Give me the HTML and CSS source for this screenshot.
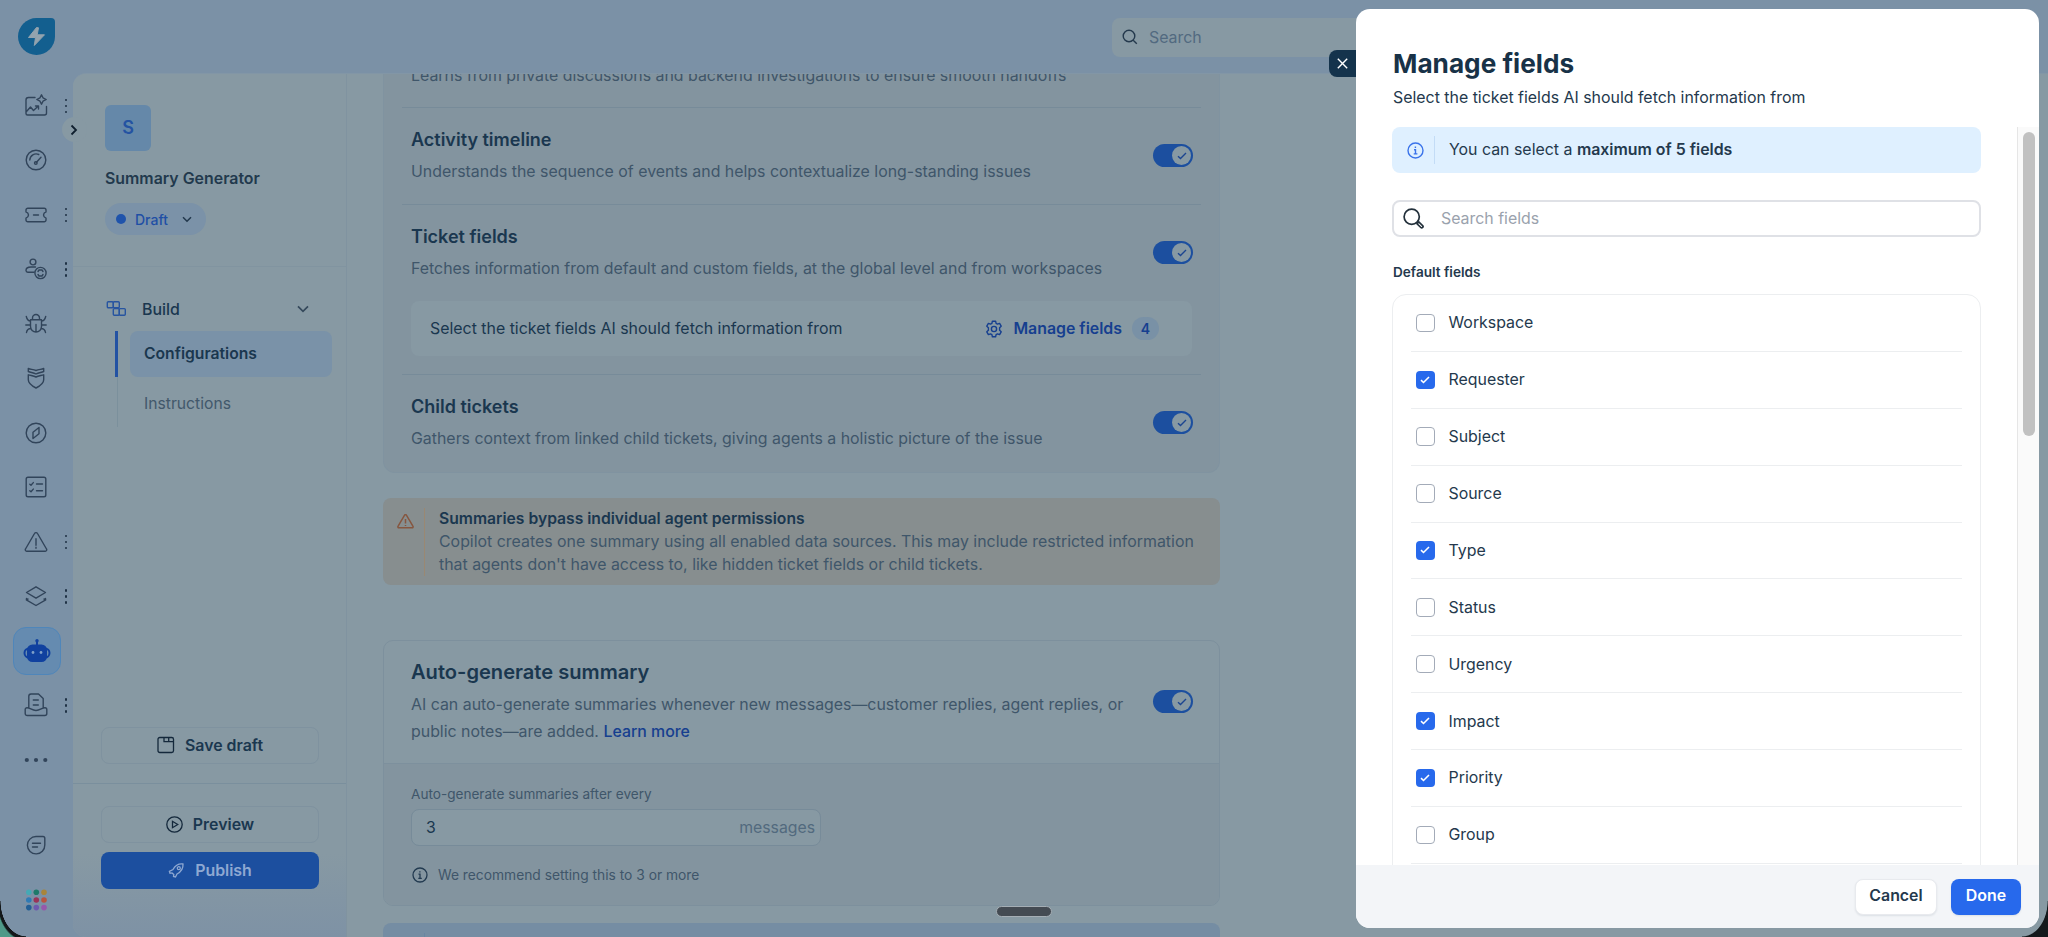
FILE: index.html
```html
<!DOCTYPE html>
<html lang="en">

<head>
  <meta charset="utf-8">
  <title>Summary Generator</title>
  <link rel="stylesheet" href="styles.css">
</head>

<body>
  <div class="app">
    <nav class="rail">
      <div class="logo">
        <svg width="37" height="37" viewBox="0 0 37 37"><path d="M18.5 0H33a4 4 0 0 1 4 4v14.500a18.500 18.500 0 1 1-18.500-18.500z" fill="#135f8f"/><path d="M18.500 9.500 10.500 19.500h7l-1.200 8L26.500 16.800h-7.300l1.300-7z" fill="#93a3ae" stroke="#93a3ae" stroke-linejoin="round"/></svg>
      </div>
      <div class="rail-item">
        <svg class="icon" width="24" height="24" viewBox="0 0 24 24"><path d="M11 3.500H4.500a2.500 2.500 0 0 0-2.500 2.500v13.500A1.500 1.500 0 0 0 3.500 21h17a2 2 0 0 0 2-2v-6.500M2.500 17.500l4-4.500 3 3.500 4.500-4.200M11.500 12h3v3M17.500.8l1.500 3 3.200 1.700-3.200 1.700-1.500 3-1.500-3-3.200-1.700L16 3.800z"/></svg>
        <span class="kebab"></span>
      </div>
      <div class="rail-item">
        <svg class="icon" width="24" height="24" viewBox="0 0 24 24"><circle cx="12" cy="12" r="9.800"/><path d="M5.800 12a6.300 6.300 0 0 1 9-5.500M12.500 14.300l4.500-5"/><circle cx="11.800" cy="15" r="1.300"/></svg>
      </div>
      <div class="rail-item">
        <svg class="icon" width="24" height="24" viewBox="0 0 24 24"><path d="M3.800 5.300h16.400a1.800 1.800 0 0 1 1.800 1.800v1.800c-3.300 1.400-3.300 4.800 0 6.200v1.800a1.800 1.800 0 0 1-1.800 1.800H3.800A1.800 1.800 0 0 1 2 16.900v-1.800c3.300-1.400 3.300-4.800 0-6.200V7.100a1.800 1.800 0 0 1 1.800-1.800zM9.500 12h5"/></svg>
        <span class="kebab"></span>
      </div>
      <div class="rail-item">
        <svg class="icon" width="24" height="24" viewBox="0 0 24 24"><circle cx="9" cy="5" r="2.900"/><path d="M10 15.200H3.800A1.800 1.800 0 0 1 2 13.500c0-2.300 2.500-3.500 5-3.500h4.500"/><circle cx="16.500" cy="16" r="5.600"/><path d="M14 14.500l1-1.500h3l1 1.500M14 17.500l1 1.500h3l1-1.500"/></svg>
        <span class="kebab"></span>
      </div>
      <div class="rail-item">
        <svg class="icon" width="24" height="24" viewBox="0 0 24 24"><path d="M8.500 7.500V6a3.500 3.500 0 0 1 7 0v1.500M6.500 7.800h11v6.700a5.500 5.500 0 0 1-11 0zM12 12.500v7.500M6.500 9C4.500 9 3 7.500 2.300 4.500M17.500 9c2 0 3.500-1.500 4.200-4.500M6.500 13H1.800M17.500 13h4.700M7 16.500c-2 0-4 1-4.500 4M17 16.500c2 0 4 1 4.500 4"/></svg>
      </div>
      <div class="rail-item">
        <svg class="icon" width="24" height="24" viewBox="0 0 24 24"><path d="M4.300 2.500c2.500.8 5 1 7.700 2 2.700-1 5.200-1.200 7.700-2v3c-2.500 1-5.200 1.200-7.700 2.500-2.500-1.300-5.200-1.500-7.700-2.500zM4.300 8.800c2.500.8 5.200 1 7.700 2.200 2.500-1.200 5.200-1.400 7.700-2.200v5c0 3.700-3.700 6.200-7.700 8.200-4-2-7.700-4.500-7.700-8.200z"/></svg>
      </div>
      <div class="rail-item">
        <svg class="icon" width="24" height="24" viewBox="0 0 24 24"><circle cx="12" cy="12" r="9.800"/><path d="M15 6.500v6.300l-6 4.700v-6.300zM9 11.200l2-1.400M15 12.800l-2 1.400"/></svg>
      </div>
      <div class="rail-item">
        <svg class="icon" width="24" height="24" viewBox="0 0 24 24"><rect x="2.200" y="2.200" width="19.600" height="19.600" rx="1.800"/><path d="M5.800 9.200l1.200 1 2.300-2.600M5.800 15.700l1.200 1 2.300-2.600M12.500 9H18.500M12.500 15.700H18.500"/></svg>
      </div>
      <div class="rail-item">
        <svg class="icon" width="24" height="24" viewBox="0 0 24 24"><path d="M10.500 3.500a1.700 1.700 0 0 1 3 0l9 15.500a1.400 1.400 0 0 1-1.200 2.200H2.700A1.400 1.400 0 0 1 1.500 19zM12 8.800v6.500M12 17.300v1"/></svg>
        <span class="kebab"></span>
      </div>
      <div class="rail-item">
        <svg class="icon" width="24" height="24" viewBox="0 0 24 24"><path d="M12 2.800l9.500 5.700-9.500 5.700-9.500-5.700zM4 15l-1.700.8L12 21.500l9.700-5.700L20 15M2.500 14.500v1M21.500 14.500v1"/></svg>
        <span class="kebab"></span>
      </div>
      <div class="rail-item">
        <div class="rail-active">
          <svg width="28" height="26" viewBox="0 0 28 26"><path d="M14 2.500V8" stroke="#10419f" stroke-width="2"/><circle cx="14" cy="2.800" r="1.700" fill="#10419f"/><rect x="1.500" y="10.500" width="25" height="9" rx="4.500" fill="none" stroke="#10419f" stroke-width="2"/><rect x="4" y="6.500" width="20" height="17.500" rx="5.500" fill="#10419f"/><circle cx="10" cy="14.500" r="1.400" fill="#7fa0c8"/><circle cx="18" cy="14.500" r="1.400" fill="#7fa0c8"/></svg>
        </div>
      </div>
      <div class="rail-item">
        <svg class="icon" width="24" height="24" viewBox="0 0 24 24"><path d="M4.800 15V3.300A2.300 2.300 0 0 1 7 1h7.500l4.700 4.500V15M9.300 7h5M9.300 12h5M1.200 16.500a1.800 1.800 0 0 1 1.800-1.800c3 0 5 2.800 9 2.800s6-2.800 9-2.800a1.800 1.800 0 0 1 1.800 1.800v4a2 2 0 0 1-2 2H3.200a2 2 0 0 1-2-2z"/></svg>
        <span class="kebab"></span>
      </div>
      <div class="rail-item">
        <svg width="24" height="24" viewBox="0 0 24 24" fill="#31445a"><circle cx="2.800" cy="12" r="2.100"/><circle cx="12" cy="12" r="2.100"/><circle cx="21.300" cy="12" r="2.100"/></svg>
      </div>
      <div class="rail-item rail-chat">
        <svg class="icon" width="24" height="24" viewBox="0 0 24 24"><path d="M12 3.500h7a1.800 1.800 0 0 1 1.800 1.800V12A8.700 8.700 0 1 1 12 3.500zM8.500 10.200h8M8.500 14h5"/></svg>
      </div>
      <div class="rail-item">
        <svg width="24" height="24" viewBox="0 0 24 24"><circle cx="4.800" cy="4.300" r="2.800" fill="#45a9b5"/><circle cx="12.300" cy="4.300" r="2.800" fill="#1d7a6a"/><circle cx="20" cy="4.300" r="2.800" fill="#a8853a"/><circle cx="4.800" cy="12" r="2.800" fill="#2f7bb5"/><circle cx="12.300" cy="12" r="2.800" fill="#9a3459"/><circle cx="20" cy="12" r="2.800" fill="#b8553f"/><circle cx="4.800" cy="19.600" r="2.800" fill="#235f95"/><circle cx="12.300" cy="19.600" r="2.800" fill="#6e5ab0"/><circle cx="20" cy="19.600" r="2.800" fill="#9757ab"/></svg>
      </div>
    </nav>

    <div class="main">
      <header class="topbar">
        <div class="top-search">
          <svg width="16" height="16" viewBox="0 0 16 16" fill="none" stroke="#24394d" stroke-width="1.400"><circle cx="7" cy="7" r="5.800"/><path d="M11.200 11.200l3.600 3.600"/></svg>
          <span>Search</span>
        </div>
      </header>

      <div class="workspace">
        <span class="expand"><svg width="8" height="12" viewBox="0 0 8 12" fill="none" stroke="#0f1f2e" stroke-width="1.800"><path d="M1.500 1.500L6 6l-4.500 4.500"/></svg></span>
        <aside class="side">
          <div class="side-head">
            <div class="avatar">S</div>
            <div class="agent-name">Summary Generator</div>
            <div class="status"><i></i>Draft<svg width="10" height="7" viewBox="0 0 10 7" fill="none" stroke="#22384d" stroke-width="1.500"><path d="M1 1.200l4 4 4-4"/></svg></div>
          </div>
          <div class="side-nav">
            <div class="group">
              <svg width="21" height="16" viewBox="0 0 20 16" fill="none" stroke="#2754a0" stroke-width="1.400"><rect x=".8" y=".8" width="6" height="6" rx="1"/><rect x="6.800" y=".8" width="6" height="6" rx="1"/><rect x="6.800" y="7.600" width="6" height="6.600" rx="1"/><rect x="12.800" y="7.600" width="6" height="6.600" rx="1"/></svg>
              <span>Build</span>
              <svg class="chev" width="12" height="8" viewBox="0 0 12 8" fill="none" stroke="#35495c" stroke-width="1.700"><path d="M1 1.300l5 5 5-5"/></svg>
            </div>
            <div class="nav-row active"><span>Configurations</span></div>
            <div class="nav-row"><span>Instructions</span></div>
          </div>
          <div class="save-box">
            <button class="btn ghost"><svg width="18" height="18" viewBox="0 0 18 18" fill="none" stroke="#14283b" stroke-width="1.300"><rect x="1" y="1.500" width="15.500" height="15" rx="1.800"/><path d="M7 1.500v4.200h9.500M11.700 1.500v4.200"/></svg><span>Save draft</span></button>
          </div>
          <div class="publish-box">
            <button class="btn ghost"><svg width="17" height="17" viewBox="0 0 17 17" fill="none" stroke="#14283b" stroke-width="1.300"><circle cx="8.500" cy="8.500" r="7.700"/><path d="M6.500 5.300v6.400l5.200-3.200z"/></svg><span>Preview</span></button>
            <button class="btn solid"><svg width="17" height="17" viewBox="0 0 17 17" fill="none" stroke="#8fa9d2" stroke-width="1.300"><path d="M5 7.500C7.500 3 10.500 1.500 15 2c.3 4-1.500 7.500-6 10l-1.500 3-2-.5.300-2-1.800-1.600-2 .4-.6-2z"/><circle cx="10.800" cy="6.200" r="1.500"/></svg><span>Publish</span></button>
          </div>
        </aside>

        <main class="content">
          <section class="card sources">
            <div class="row first">
              <p class="desc">Learns from private discussions and backend investigations to ensure smooth handoffs</p>
            </div>
            <div class="row">
              <h3>Activity timeline</h3>
              <p class="desc">Understands the sequence of events and helps contextualize long-standing issues</p>
              <span class="toggle"><i><svg width="10" height="8" viewBox="0 0 10 8"><path d="M1 4.200l2.500 2.300L9 1"/></svg></i></span>
            </div>
            <div class="row tickets">
              <h3>Ticket fields</h3>
              <p class="desc">Fetches information from default and custom fields, at the global level and from workspaces</p>
              <span class="toggle"><i><svg width="10" height="8" viewBox="0 0 10 8"><path d="M1 4.200l2.500 2.300L9 1"/></svg></i></span>
              <div class="manage">
                <span>Select the ticket fields AI should fetch information from</span>
                <a class="manage-link"><svg width="18" height="18" viewBox="0 0 18 18" fill="none" stroke="#163f8f" stroke-width="1.400" stroke-linejoin="round"><path d="M7.400 1.200h3.200l.5 2.100 1.400.8 2.100-.7 1.600 2.800-1.600 1.500v2.600l1.600 1.500-1.600 2.800-2.100-.7-1.400.8-.5 2.100H7.400l-.5-2.100-1.400-.8-2.100.7-1.600-2.800 1.600-1.500V7.700L1.800 6.200l1.600-2.800 2.100.7 1.400-.8z"/><circle cx="9" cy="9" r="2.600"/></svg><b>Manage fields</b></a>
                <span class="count">4</span>
              </div>
            </div>
            <div class="row last">
              <h3>Child tickets</h3>
              <p class="desc">Gathers context from linked child tickets, giving agents a holistic picture of the issue</p>
              <span class="toggle"><i><svg width="10" height="8" viewBox="0 0 10 8"><path d="M1 4.200l2.500 2.300L9 1"/></svg></i></span>
            </div>
          </section>

          <section class="warning">
            <svg width="17" height="15" viewBox="0 0 17 15" fill="none" stroke="#86563f" stroke-width="1.500" stroke-linejoin="round"><path d="M7.600 1.200a1 1 0 0 1 1.800 0l6.500 11a1 1 0 0 1-.9 1.600H2a1 1 0 0 1-.9-1.600zM8.500 5v4.500M8.500 11v1"/></svg>
            <div class="warning-text">
              <b>Summaries bypass individual agent permissions</b>
              <p>Copilot creates one summary using all enabled data sources. This may include restricted information<br>that agents don't have access to, like hidden ticket fields or child tickets.</p>
            </div>
          </section>

          <section class="card auto">
            <div class="auto-head">
              <h2>Auto-generate summary</h2>
              <p class="desc">AI can auto-generate summaries whenever new messages—customer replies, agent replies, or<br>public notes—are added. <a>Learn more</a></p>
              <span class="toggle"><i><svg width="10" height="8" viewBox="0 0 10 8"><path d="M1 4.200l2.500 2.300L9 1"/></svg></i></span>
            </div>
            <div class="auto-body">
              <label>Auto-generate summaries after every</label>
              <div class="number"><span>3</span><em>messages</em></div>
              <div class="hint"><svg width="16" height="16" viewBox="0 0 16 16" fill="none" stroke="#223a50" stroke-width="1.300"><circle cx="8" cy="8" r="7"/><path d="M6.500 7.200H8v4M6.300 11.300h3.500M7.900 4.200v1.300"/></svg><span>We recommend setting this to 3 or more</span></div>
            </div>
          </section>

          <section class="next"><div class="next-line"></div></section>
        </main>
      </div>
    </div>
  </div>

  <span class="drag-handle"></span>
  <span class="corner left"></span>
  <span class="corner right"></span>

  <div class="drawer">
    <button class="close"><svg width="11" height="11" viewBox="0 0 11 11" stroke="#fff" stroke-width="1.400"><path d="M.8.8l9.400 9.400M10.200.8L.8 10.200"/></svg></button>
    <div class="drawer-head">
      <h1>Manage fields</h1>
      <p>Select the ticket fields AI should fetch information from</p>
    </div>
    <div class="drawer-body">
      <div class="drawer-scroll">
        <div class="info">
          <svg width="17" height="17" viewBox="0 0 17 17" fill="none" stroke="#3a73ea" stroke-width="1.400"><circle cx="8.500" cy="8.500" r="7.500"/><path d="M7 7.700h1.500v4.100M6.700 11.900h3.700M8.400 4.600v1.400"/></svg>
          <span class="info-text">You can select a <b>maximum of 5 fields</b></span>
        </div>
        <div class="search">
          <svg width="21" height="21" viewBox="0 0 21 21" fill="none" stroke="#23303b" stroke-width="1.700"><circle cx="8.700" cy="8.700" r="7.600"/><path d="M14 15.800l1.800-1.800 3.800 3.600a1.300 1.300 0 0 1-1.800 1.900z"/></svg>
          <span>Search fields</span>
        </div>
        <h4>Default fields</h4>
        <div class="fields" id="fields"></div>
      </div>
      <div class="scrollbar"><i></i></div>
    </div>
    <div class="drawer-foot">
      <button class="foot-btn">Cancel</button>
      <button class="foot-btn primary">Done</button>
    </div>
  </div>

  <script src="script.js"></script>
</body>

</html>
```

FILE: script.js
```js
var fields = [
  ["Workspace", false],
  ["Requester", true],
  ["Subject", false],
  ["Source", false],
  ["Type", true],
  ["Status", false],
  ["Urgency", false],
  ["Impact", true],
  ["Priority", true],
  ["Group", false]
];

var html = "";
fields.forEach(function (f) {
  html += '<div class="field"><span class="box' + (f[1] ? ' checked' : '') + '">';
  if (f[1]) {
    html += '<svg width="10" height="8" viewBox="0 0 10 8"><path d="M1 4.200l2.500 2.300L9 1"/></svg>';
  }
  html += '</span><span>' + f[0] + '</span></div>';
});
document.getElementById("fields").innerHTML = html;
```

FILE: styles.css
```css
* {
  box-sizing: border-box;
}

body {
  margin: 0;
  height: 937px;
  overflow: hidden;
  position: relative;
  font-family: "Inter", sans-serif;
  font-size: 15.9px;
  color: #1a374f;
  background: #7b91a6;
}

h1, h2, h3, h4, p {
  margin: 0;
}

button {
  font-family: inherit;
}

.app {
  display: flex;
  height: 937px;
}

/* left icon rail */
.rail {
  width: 73px;
  flex: none;
  display: flex;
  flex-direction: column;
}

.logo {
  height: 78.5px;
  flex: none;
  padding: 18px 0 0 18px;
}

.logo svg {
  display: block;
}

.rail-item {
  height: 54.5px;
  flex: none;
  display: flex;
  align-items: center;
  padding-left: 24px;
  position: relative;
}

.icon {
  fill: none;
  stroke: #31445a;
  stroke-width: 1.4;
  stroke-linecap: round;
  stroke-linejoin: round;
}

.kebab {
  position: absolute;
  left: 64.5px;
  top: 20px;
  width: 2.5px;
  height: 2.5px;
  border-radius: 50%;
  background: #1f3245;
  box-shadow: 0 6px #1f3245, 0 12px #1f3245;
}

.rail-active {
  width: 48px;
  height: 48px;
  margin-left: -11px;
  border: 1px solid #4f86ba;
  border-radius: 13px;
  background: #658bb0;
  display: flex;
  align-items: center;
  justify-content: center;
}

.rail-chat {
  margin-top: 31px;
}

/* header */
.main {
  flex: 1;
  display: flex;
  flex-direction: column;
}

.topbar {
  height: 73px;
  flex: none;
  padding: 18px 0 0 1039px;
}

.top-search {
  width: 420px;
  height: 39px;
  padding: 0 0 1px 10px;
  border-radius: 8px;
  background: #8799a3;
  display: flex;
  align-items: center;
  gap: 11px;
  color: #526a80;
}

.workspace {
  flex: 1;
  min-height: 0;
  display: flex;
  position: relative;
  background: #8799a3;
  border-top: 1px solid #8296a6;
  border-radius: 13px 0 0 13px;
}

.expand {
  position: absolute;
  left: -11px;
  top: 43px;
  width: 25px;
  height: 25px;
  padding-right: 2px;
  border-radius: 50%;
  background: #8799a3;
  display: flex;
  align-items: center;
  justify-content: center;
}

/* agent side panel */
.side {
  width: 274px;
  flex: none;
  display: flex;
  flex-direction: column;
  border-right: 1px solid #8093a0;
  border-radius: 13px 0 0 13px;
  background: linear-gradient(#8799a3 0, #8799a3 780px, #7e92a5 100%);
}

.side-head {
  height: 193px;
  padding: 31px 0 0 32px;
  border-bottom: 1px solid #8194a0;
}

.avatar {
  width: 46px;
  height: 46px;
  border-radius: 6px;
  background: #6588a9;
  color: #2453a2;
  font-size: 18px;
  font-weight: 600;
  line-height: 46px;
  text-align: center;
}

.agent-name {
  margin-top: 16px;
  line-height: 24px;
  font-weight: 600;
  color: #22394d;
}

.status {
  width: 101px;
  height: 32px;
  margin-top: 12px;
  padding-left: 11px;
  border-radius: 16px;
  background: #7b92a8;
  color: #1f4fa5;
  font-size: 14px;
  font-weight: 500;
  display: flex;
  align-items: center;
}

.status i {
  width: 10px;
  height: 10px;
  margin-right: 9px;
  border-radius: 50%;
  background: #1f53ab;
}

.status svg {
  margin-left: 14px;
}

.side-nav {
  flex: 1;
  padding-top: 28px;
}

.group {
  height: 28px;
  margin-bottom: 8px;
  padding: 0 37px 0 33px;
  display: flex;
  align-items: center;
  font-weight: 500;
}

.group span {
  margin-left: 15px;
}

.group .chev {
  margin-left: auto;
}

.nav-row {
  height: 50px;
  margin-left: 44px;
  padding: 4px 14px 0 12px;
  border-left: 1px solid #7b909c;
  color: #42586b;
  font-size: 15.700px;
}

.nav-row span {
  display: block;
  height: 46px;
  line-height: 46px;
  padding-left: 14px;
  border-radius: 8px;
}

.nav-row.active {
  height: 46px;
  margin-left: 42px;
  padding-top: 0;
  border-left: 3px solid #2352a3;
  color: #1a374f;
  font-weight: 600;
}

.nav-row.active span {
  background: #7a92a8;
}

.save-box {
  padding: 0 27px 19px 28px;
  border-bottom: 1px solid #7a8f9d;
}

.publish-box {
  height: 153px;
  padding: 22px 27px 0 28px;
  display: flex;
  flex-direction: column;
  gap: 9px;
}

.btn {
  width: 100%;
  height: 37px;
  padding: 0 6px 1px;
  border: 1px solid #7f929f;
  border-radius: 8px;
  background: #8799a3;
  color: #1a374f;
  font-size: 15.900px;
  font-weight: 600;
  display: flex;
  align-items: center;
  justify-content: center;
  gap: 10px;
}

.btn.solid {
  border: 0;
  background: #1c4f9f;
  color: #8fa9d2;
}

/* content column */
.content {
  flex: 1;
  overflow: hidden;
  padding-left: 36px;
}

.card, .warning, .next {
  width: 837px;
}

.sources {
  padding: 0 18px;
  background: #83949f;
  border: 1px solid #8093a0;
  border-top: 0;
  border-radius: 0 0 12px 12px;
}

.row {
  position: relative;
  height: 97px;
  padding: 19px 9px 0;
  border-bottom: 1px solid #778b99;
}

.row.first {
  height: 34px;
  padding-top: 0;
  display: flex;
}

.row.first .desc {
  margin-top: -11px;
}

.row.tickets {
  height: 170px;
}

.row.last {
  border: 0;
}

.desc {
  line-height: 26px;
  color: #3f566a;
}

h3 {
  margin-bottom: 6px;
  font-size: 18px;
  line-height: 26px;
  font-weight: 600;
}

.toggle {
  position: absolute;
  right: 8px;
  top: 36px;
  width: 40px;
  height: 23px;
  border-radius: 12px;
  background: #1c4f9f;
}

.toggle i {
  position: absolute;
  right: 2px;
  top: 2px;
  width: 19px;
  height: 19px;
  border-radius: 50%;
  background: #8799a3;
  display: flex;
  align-items: center;
  justify-content: center;
}

.toggle path {
  fill: none;
  stroke: #1c4590;
  stroke-width: 1.4;
}

.manage {
  height: 55px;
  margin-top: 19px;
  padding: 0 33px 0 19px;
  border-radius: 8px;
  background: #8799a3;
  display: flex;
  align-items: center;
}

.manage-link {
  margin-left: auto;
  display: flex;
  align-items: center;
  gap: 10px;
  color: #163f8f;
}

.manage b, .info b, .warning b {
  font-weight: 600;
}

.count {
  width: 27px;
  height: 23px;
  margin-left: 10px;
  border-radius: 12px;
  background: #7991a6;
  color: #163f8f;
  font-size: 14px;
  font-weight: 600;
  line-height: 23px;
  text-align: center;
}

.warning {
  height: 87px;
  margin-top: 25px;
  padding: 10px 15px;
  border-radius: 8px;
  background: #878e8f;
  display: flex;
}

.warning svg {
  margin: 6px 10px 0 -1px;
}

.warning-text {
  height: 68px;
  padding-left: 14px;
  border-left: 1px solid #9a8872;
  line-height: 22.8px;
}

.warning b {
  display: block;
  font-size: 15.7px;
}

.warning-text p {
  color: #3f566a;
}

.auto {
  height: 266px;
  margin-top: 55px;
  border: 1px solid #7d909d;
  border-radius: 10px;
  overflow: hidden;
}

.auto-head {
  position: relative;
  height: 123px;
  padding: 17px 27px;
  border-bottom: 1px solid #7d909d;
}

.auto-head .desc {
  margin-top: 5px;
  line-height: 27px;
}

.auto-head a {
  color: #163f8f;
  font-weight: 500;
}

.auto-head .toggle {
  right: 26px;
  top: 49px;
}

h2 {
  font-size: 20.1px;
  line-height: 28px;
  font-weight: 600;
}

.auto-body {
  height: 143px;
  padding: 20px 27px;
  background: #83949f;
  font-size: 13.8px;
  color: #3f566a;
}

.auto-body label {
  display: block;
  font-size: 13.6px;
  line-height: 20px;
}

.number {
  width: 410px;
  height: 37px;
  margin-top: 5px;
  padding: 0 5px 0 14px;
  border: 1px solid #778b99;
  border-radius: 8px;
  background: #8799a3;
  display: flex;
  align-items: center;
  justify-content: space-between;
  font-size: 15.8px;
  color: #1a374f;
}

.number em {
  font-style: normal;
  color: #526a7e;
}

.hint {
  display: flex;
  align-items: center;
  gap: 10px;
  margin-top: 19px;
  padding-left: 1px;
  line-height: 20px;
}

.next {
  height: 80px;
  margin-top: 17px;
  padding: 10px 0 0 41px;
  border-radius: 8px;
  background: #758da3;
}

.next-line {
  height: 60px;
  border-left: 1px solid #6a86a2;
}

.drag-handle {
  position: absolute;
  left: 996px;
  top: 906px;
  width: 56px;
  height: 11px;
  border: 1px solid #a5aeb5;
  border-radius: 6px;
  background: #444b53;
}

/* rounded window corners */
.corner {
  position: absolute;
  bottom: 0;
  width: 26px;
  height: 36px;
}

.corner.left {
  left: 0;
  background: radial-gradient(ellipse 26px 36px at 100% 0, transparent 97%, #14181a 99%, #14181a 107%, #4f9a88 112%);
}

.corner.right {
  right: 0;
  background: radial-gradient(ellipse 26px 36px at 0 0, transparent 97%, #14191c 100%);
}

/* drawer */
.drawer {
  position: absolute;
  left: 1356px;
  top: 9px;
  width: 683px;
  height: 919px;
  border-radius: 14px;
  background: #fff;
  display: flex;
  flex-direction: column;
  color: #24394d;
}

.close {
  position: absolute;
  left: -27px;
  top: 41px;
  width: 27px;
  height: 27px;
  padding: 0;
  border: 0;
  border-radius: 8px 0 0 8px;
  background: #14334c;
  display: flex;
  align-items: center;
  justify-content: center;
}

.drawer-head {
  height: 118px;
  flex: none;
  padding: 37px 0 0 37px;
}

h1 {
  font-size: 26.2px;
  line-height: 36px;
  font-weight: 700;
  color: #183247;
}

.drawer-head p {
  margin-top: 4px;
  line-height: 24px;
}

.drawer-body {
  flex: 1;
  min-height: 0;
  display: flex;
}

.drawer-scroll {
  flex: 1;
  overflow: hidden;
  padding: 0 36px;
}

.info {
  height: 46px;
  padding: 9px 15px;
  border-radius: 8px;
  background: #dff0ff;
  display: flex;
  align-items: center;
}

.info svg {
  margin-right: 10px;
}

.info-text {
  height: 28px;
  padding-left: 14px;
  border-left: 1px solid #c3dcf6;
  line-height: 28px;
}

.search {
  height: 37px;
  margin-top: 27px;
  padding: 0 0 1px 9px;
  border: 2px solid #dfe1e6;
  border-radius: 8px;
  display: flex;
  align-items: center;
  gap: 17px;
  color: #9aa2ad;
}

h4 {
  margin: 25px 0 11px 1px;
  font-size: 13.6px;
  line-height: 21px;
  font-weight: 600;
}

.fields {
  border: 1px solid #eceef0;
  border-radius: 14px;
  padding: 0 18px 30px;
}

.field {
  height: 56.88px;
  padding-left: 5px;
  border-bottom: 1px solid #eceef0;
  display: flex;
  align-items: center;
  gap: 14px;
}

.box {
  width: 18.5px;
  height: 18.5px;
  border: 1px solid #a3abb8;
  border-radius: 4px;
  display: flex;
  align-items: center;
  justify-content: center;
}

.box.checked {
  border: 0;
  background: #2769ec;
}

.box path {
  fill: none;
  stroke: #fff;
  stroke-width: 1.6;
}

.scrollbar {
  width: 22px;
  border-left: 1px solid #e6e6e6;
  background: #fafafa;
}

.scrollbar i {
  display: block;
  width: 11.5px;
  height: 304px;
  margin: 4.5px 0 0 5px;
  border-radius: 6px;
  background: #c1c1c1;
}

.drawer-foot {
  height: 63px;
  flex: none;
  padding-right: 18px;
  border-radius: 0 0 14px 14px;
  background: #f3f5f8;
  display: flex;
  align-items: center;
  justify-content: flex-end;
  gap: 14px;
}

.foot-btn {
  width: 82px;
  height: 36px;
  padding: 0 0 2px;
  border: 1px solid #e8eaee;
  border-radius: 8px;
  background: #fff;
  box-shadow: 0 1px 2px rgba(24, 50, 71, .1);
  font-size: 15.9px;
  font-weight: 600;
  color: #24394d;
}

.foot-btn.primary {
  width: 70px;
  border: 0;
  background: #2769ec;
  color: #fff;
}
```
